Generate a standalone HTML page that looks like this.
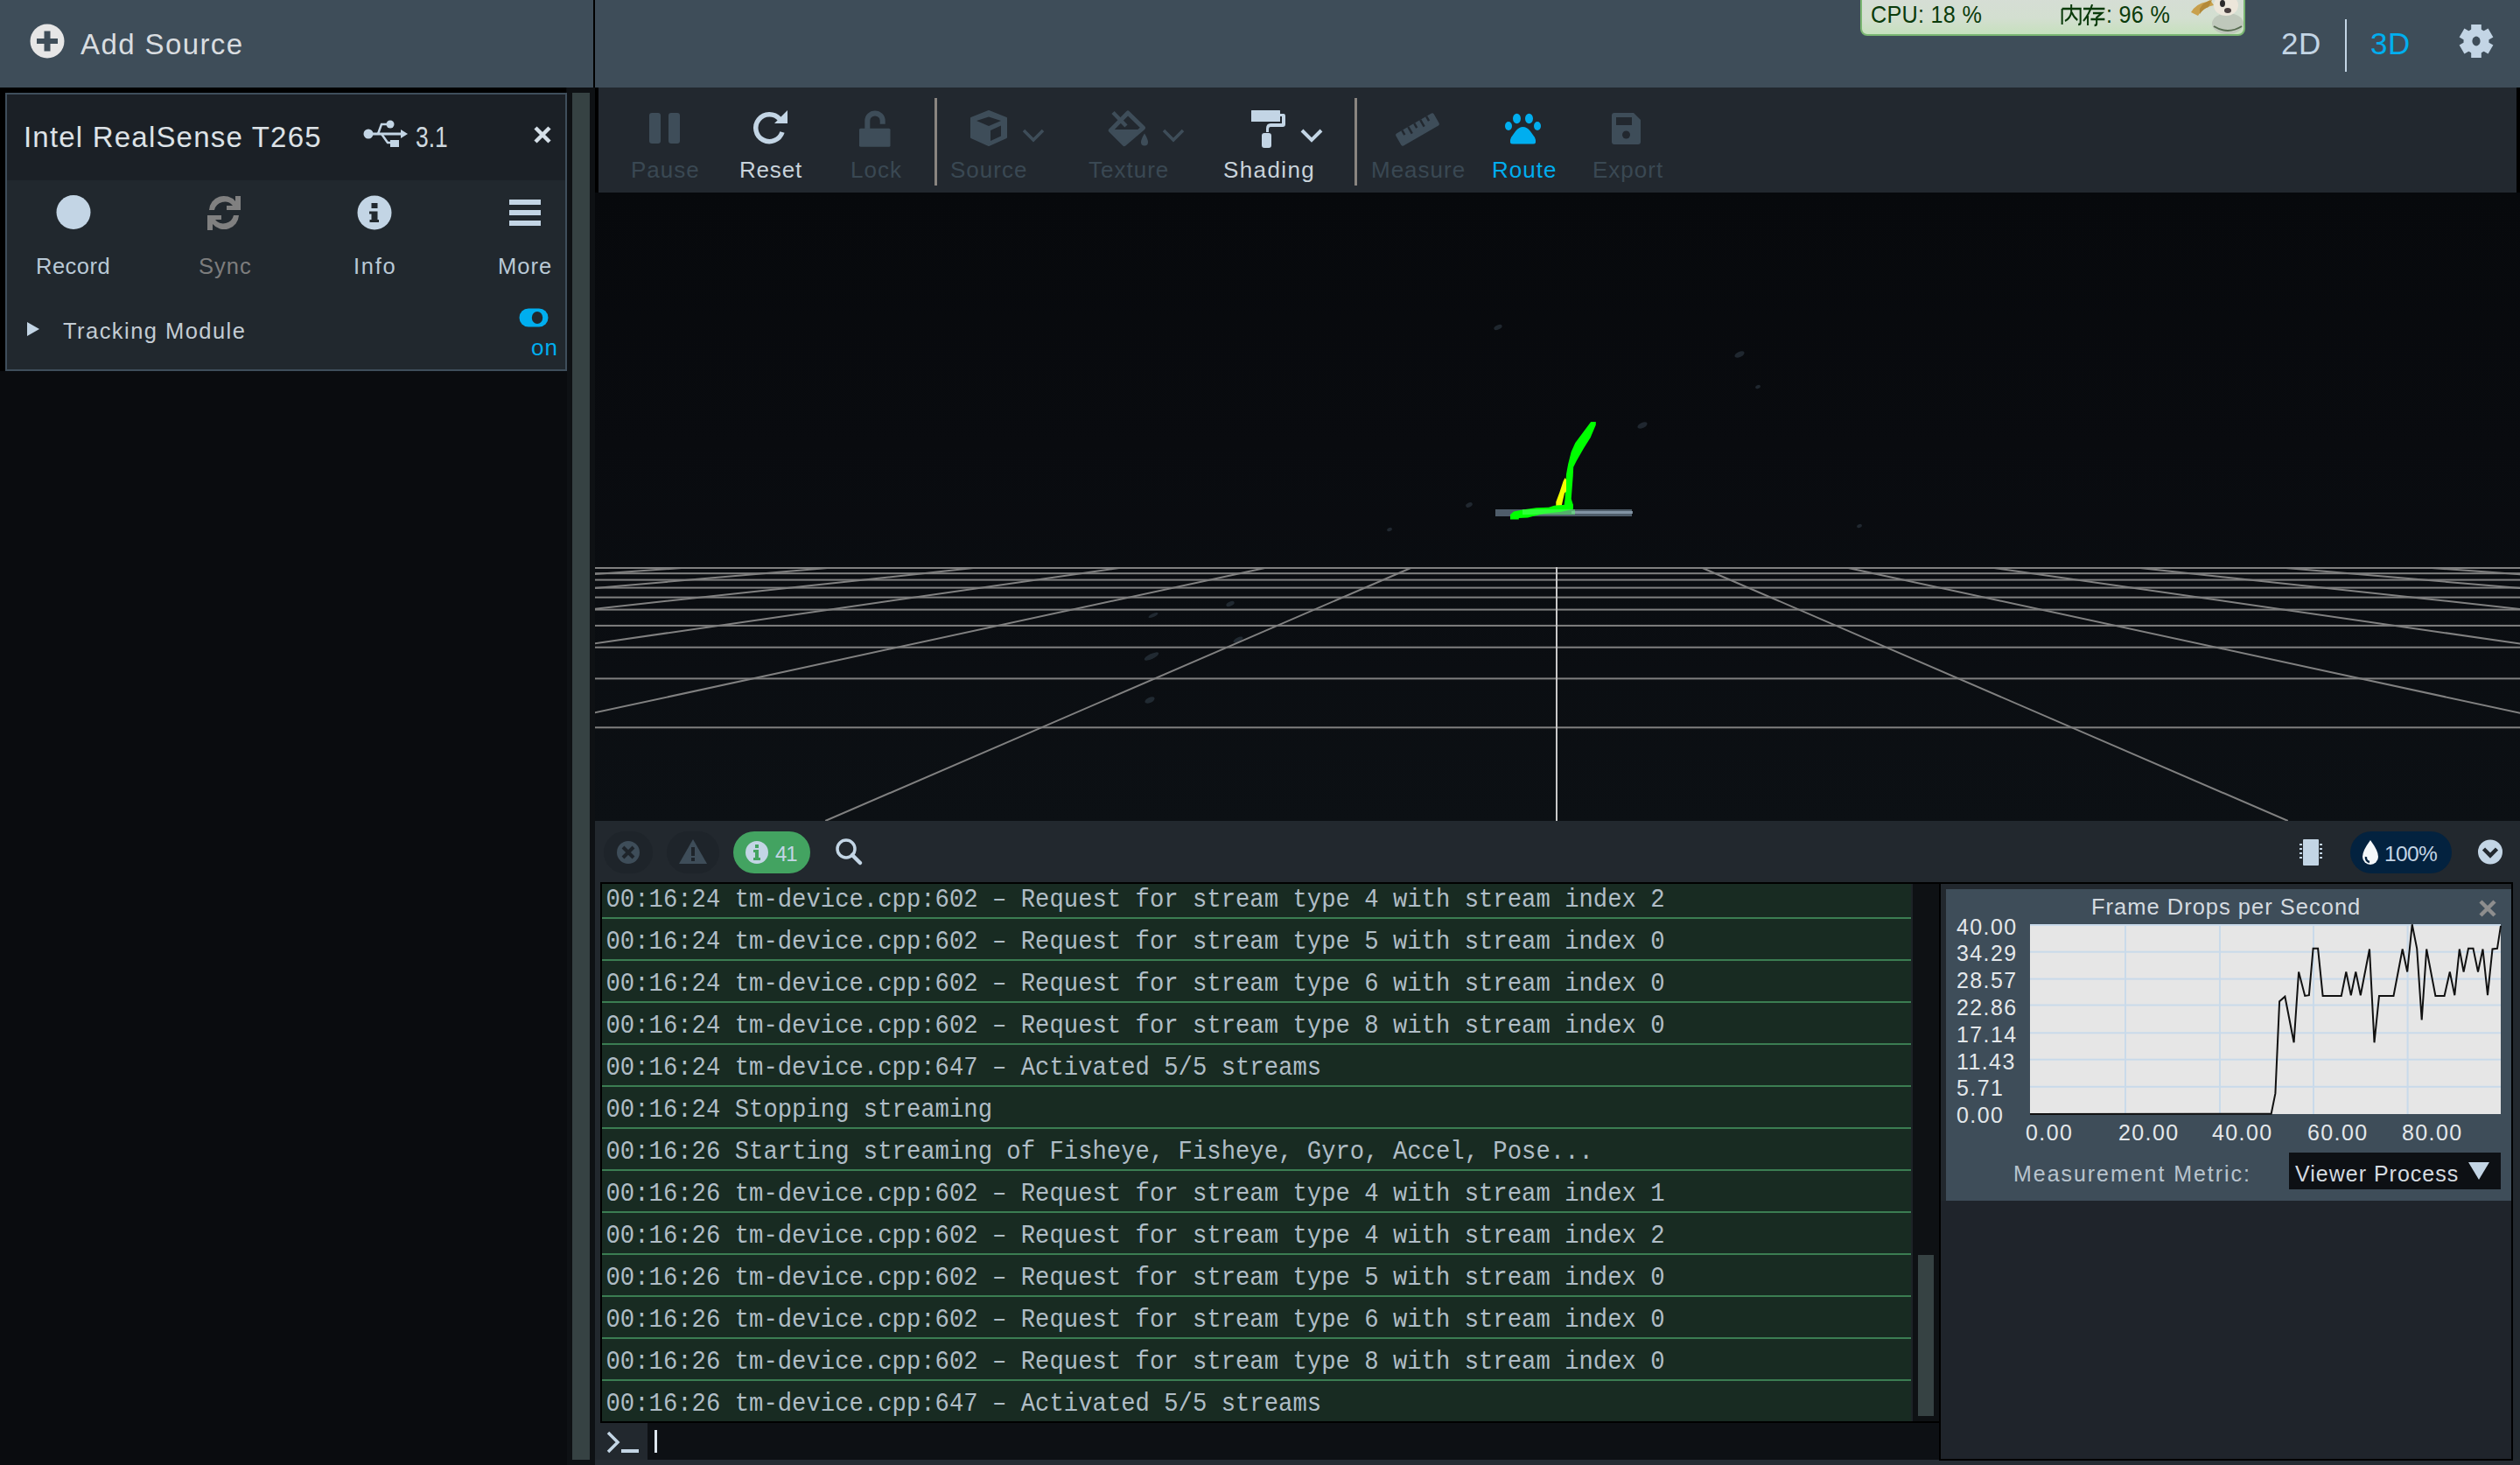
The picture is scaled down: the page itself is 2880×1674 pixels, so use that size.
<!DOCTYPE html><html><head><meta charset="utf-8"><style>
html,body{margin:0;padding:0;background:#090b0d}
body{width:2880px;height:1674px;position:relative;overflow:hidden;background:#090b0d;font-family:'Liberation Sans',sans-serif}
</style></head><body>
<div style="position:absolute;left:0px;top:0px;width:2880px;height:100px;background:#3e4d59;"></div>
<div style="position:absolute;left:678px;top:0px;width:2px;height:100px;background:#000;"></div>
<svg style="position:absolute;left:34px;top:27px;" width="40" height="40" viewBox="0 0 40 40"><circle cx="20" cy="20" r="19.5" fill="#e6e6e6"/><rect x="8" y="17" width="24" height="6" fill="#3e4d59"/><rect x="16.5" y="8.5" width="7" height="23" fill="#3e4d59"/></svg>
<div style="position:absolute;left:92px;top:34.07px;font-family:'Liberation Sans',sans-serif;font-size:33px;line-height:1;letter-spacing:1.4px;color:#d9dde0;white-space:pre;">Add Source</div>
<div style="position:absolute;left:2126px;top:-8px;width:436px;height:45px;border:2px solid #79b571;border-radius:8px;background:linear-gradient(#d6ddd6,#d3dfd0 60%,#c6e0bd);"></div>
<div style="position:absolute;left:2138px;top:3.30px;font-family:'Liberation Sans',sans-serif;font-size:28px;line-height:1;letter-spacing:0.3px;color:#0b3b0b;white-space:pre;transform:scaleX(0.9);transform-origin:0 0;">CPU: 18 %</div>
<svg style="position:absolute;left:2355px;top:5px;" width="54" height="26" viewBox="0 0 54 26"><g fill="none" stroke="#0b3b0b" stroke-width="2.4" transform="scale(0.84 1)"><path d="M2 5 V23 M2 5 H27 V21 Q27 23 24 23 M14.5 0 V9 Q13 16 6 19 M15 9 Q18 15 23 18"/><path d="M31 5 H60 M43 0 Q39 11 31 19 M37 13 V24 M44 10 H56 L49 15 V22 Q49 24 46 24 M41 17 H60"/></g></svg>
<div style="position:absolute;left:2407px;top:3.30px;font-family:'Liberation Sans',sans-serif;font-size:28px;line-height:1;letter-spacing:0.3px;color:#0b3b0b;white-space:pre;transform:scaleX(0.9);transform-origin:0 0;">: 96 %</div>
<svg style="position:absolute;left:2500px;top:0px;" width="66" height="40" viewBox="0 0 66 40"><path d="M4 14 Q10 4 22 2 L26 0 L30 6 Q18 8 12 18Z" fill="#c8a04c"/><path d="M14 10 Q18 2 28 0 L24 8Q18 10 14 16Z" fill="#b38a3a"/><ellipse cx="46" cy="27" rx="18" ry="12" fill="#bfc8bb"/><path d="M30 30 Q46 40 62 30" stroke="#556b4f" stroke-width="2" fill="none"/><ellipse cx="44" cy="6" rx="14" ry="12" fill="#ece6da"/><ellipse cx="40" cy="4" rx="3" ry="4" fill="#2a2a2a"/><ellipse cx="46" cy="12" rx="4" ry="3" fill="#4a4040"/></svg>
<div style="position:absolute;left:2607px;top:32.37px;font-family:'Liberation Sans',sans-serif;font-size:35px;line-height:1;letter-spacing:0.5px;color:#c3d5e5;white-space:pre;">2D</div>
<div style="position:absolute;left:2680px;top:22px;width:2px;height:60px;background:#c3d5e5;"></div>
<div style="position:absolute;left:2709px;top:32.37px;font-family:'Liberation Sans',sans-serif;font-size:35px;line-height:1;letter-spacing:0.5px;color:#00aeef;white-space:pre;">3D</div>
<svg style="position:absolute;left:2810px;top:26px;" width="40" height="42" viewBox="0 0 40 42"><rect x="14.2" y="2" width="11.6" height="10" fill="#c3d5e5" transform="rotate(0 20 21)"/><rect x="14.2" y="2" width="11.6" height="10" fill="#c3d5e5" transform="rotate(60 20 21)"/><rect x="14.2" y="2" width="11.6" height="10" fill="#c3d5e5" transform="rotate(120 20 21)"/><rect x="14.2" y="2" width="11.6" height="10" fill="#c3d5e5" transform="rotate(180 20 21)"/><rect x="14.2" y="2" width="11.6" height="10" fill="#c3d5e5" transform="rotate(240 20 21)"/><rect x="14.2" y="2" width="11.6" height="10" fill="#c3d5e5" transform="rotate(300 20 21)"/><circle cx="20" cy="21" r="14.5" fill="#c3d5e5"/><ellipse cx="20" cy="21" rx="4.6" ry="5.4" fill="#3e4d59"/></svg>
<div style="position:absolute;left:0px;top:100px;width:680px;height:1574px;background:#0a0c0f;"></div>
<div style="position:absolute;left:0px;top:100px;width:647px;height:6px;background:#000;"></div>
<div style="position:absolute;left:0px;top:100px;width:6px;height:324px;background:#000;"></div>
<div style="position:absolute;left:6px;top:106px;width:642px;height:318px;background:#3f4e5b;"></div>
<div style="position:absolute;left:8px;top:108px;width:638px;height:98px;background:#1b2026;"></div>
<div style="position:absolute;left:8px;top:206px;width:638px;height:216px;background:#21282e;"></div>
<div style="position:absolute;left:648px;top:100px;width:32px;height:1574px;background:#0e1114;"></div>
<div style="position:absolute;left:654px;top:106px;width:20px;height:1562px;background:#364243;"></div>
<div style="position:absolute;left:27px;top:140.07px;font-family:'Liberation Sans',sans-serif;font-size:33px;line-height:1;letter-spacing:1.2px;color:#dde2e6;white-space:pre;">Intel RealSense T265</div>
<svg style="position:absolute;left:414px;top:136px;" width="54" height="34" viewBox="0 0 54 34"><g fill="#c3d5e5" stroke="#c3d5e5"><circle cx="7" cy="17" r="5.5" stroke="none"/><path d="M7 17 H46" stroke-width="3" fill="none"/><path d="M44 12 L52 17 L44 22Z" stroke="none"/><path d="M18 17 L22 6 H29" stroke-width="2.5" fill="none"/><circle cx="32" cy="6" r="4.5" stroke="none"/><path d="M22 17 L29 27 H33" stroke-width="2.5" fill="none"/><rect x="32" y="24" width="10" height="8" stroke="none"/></g></svg>
<div style="position:absolute;left:475px;top:140.07px;font-family:'Liberation Sans',sans-serif;font-size:33px;line-height:1;letter-spacing:0px;color:#cfd8df;white-space:pre;transform:scaleX(0.8);transform-origin:0 0;">3.1</div>
<svg style="position:absolute;left:608px;top:142px;" width="24" height="24" viewBox="0 0 24 24"><path d="M4 4 L20 20 M20 4 L4 20" stroke="#d5dfe8" stroke-width="4.5"/></svg>
<svg style="position:absolute;left:64px;top:223px;" width="40" height="40" viewBox="0 0 40 40"><circle cx="20" cy="19.5" r="19.5" fill="#c3d5e5"/></svg>
<svg style="position:absolute;left:235px;top:221px;" width="42" height="44" viewBox="0 0 42 44"><g fill="#808080"><path d="M4 19 A17 17 0 0 1 34 9 L34 3 L40 3 L40 19 L24 19 L24 14 L31 14 A12 12 0 0 0 10 19 Z"/><path d="M38 25 A17 17 0 0 1 8 35 L8 42 L2 42 L2 25 L18 25 L18 30 L11 30 A12 12 0 0 0 32 25 Z"/></g></svg>
<svg style="position:absolute;left:408px;top:223px;" width="40" height="40" viewBox="0 0 40 40"><circle cx="20" cy="20" r="19.5" fill="#c3d5e5"/><g fill="#21282e"><rect x="16.5" y="9" width="7" height="6"/><path d="M14 18.5 H23.5 V28 H25 V31 H14.5 V28 H16.5 V21.5 H14Z"/></g></svg>
<svg style="position:absolute;left:582px;top:227px;" width="36" height="32" viewBox="0 0 36 32"><g fill="#c3d5e5"><rect x="0" y="1" width="36" height="6"/><rect x="0" y="13" width="36" height="6"/><rect x="0" y="25" width="36" height="6"/></g></svg>
<div style="position:absolute;left:41px;top:292.41px;font-family:'Liberation Sans',sans-serif;font-size:25.5px;line-height:1;letter-spacing:0.5px;color:#b9c9d6;white-space:pre;">Record</div>
<div style="position:absolute;left:227px;top:292.41px;font-family:'Liberation Sans',sans-serif;font-size:25.5px;line-height:1;letter-spacing:1.0px;color:#7d7d7d;white-space:pre;">Sync</div>
<div style="position:absolute;left:404px;top:292.41px;font-family:'Liberation Sans',sans-serif;font-size:25.5px;line-height:1;letter-spacing:1.7px;color:#b9c9d6;white-space:pre;">Info</div>
<div style="position:absolute;left:569px;top:292.41px;font-family:'Liberation Sans',sans-serif;font-size:25.5px;line-height:1;letter-spacing:1.0px;color:#b9c9d6;white-space:pre;">More</div>
<svg style="position:absolute;left:30px;top:367px;" width="16" height="18" viewBox="0 0 16 18"><path d="M1 1 L15 9 L1 17Z" fill="#c3d5e5"/></svg>
<div style="position:absolute;left:72px;top:366.41px;font-family:'Liberation Sans',sans-serif;font-size:25.5px;line-height:1;letter-spacing:1.45px;color:#c3ccd4;white-space:pre;">Tracking Module</div>
<svg style="position:absolute;left:593px;top:352px;" width="34" height="23" viewBox="0 0 34 23"><rect x="0.5" y="0.5" width="33" height="21" rx="10.5" fill="#00aeef"/><ellipse cx="21" cy="11" rx="6.2" ry="7" fill="#21282e"/></svg>
<div style="position:absolute;left:607px;top:383.99px;font-family:'Liberation Sans',sans-serif;font-size:26px;line-height:1;letter-spacing:1.0px;color:#00aeef;white-space:pre;">on</div>
<div style="position:absolute;left:680px;top:100px;width:4px;height:120px;background:#000;"></div>
<div style="position:absolute;left:684px;top:100px;width:2192px;height:120px;background:#22282f;"></div>
<div style="position:absolute;left:2876px;top:100px;width:4px;height:120px;background:#000;"></div>
<svg style="position:absolute;left:742px;top:129px;" width="36" height="36" viewBox="0 0 36 36"><g fill="#3e4d59"><rect x="0" y="0" width="13" height="35" rx="3"/><rect x="22" y="0" width="13" height="35" rx="3"/></g></svg>
<div style="position:absolute;left:721px;top:180.99px;font-family:'Liberation Sans',sans-serif;font-size:26px;line-height:1;letter-spacing:1.0px;color:#3a4853;white-space:pre;">Pause</div>
<svg style="position:absolute;left:858px;top:124px;" width="44" height="44" viewBox="0 0 44 44"><path d="M33 12 A15.5 15.5 0 1 0 36 27" fill="none" stroke="#c3d5e5" stroke-width="5.5"/><path d="M42 2 V17 H27 Z" fill="#c3d5e5"/></svg>
<div style="position:absolute;left:845px;top:180.99px;font-family:'Liberation Sans',sans-serif;font-size:26px;line-height:1;letter-spacing:0.8px;color:#c9d3db;white-space:pre;">Reset</div>
<svg style="position:absolute;left:980px;top:124px;" width="40" height="44" viewBox="0 0 40 44"><path d="M11.3 23 V14.1 A8.7 8.7 0 0 1 28.7 14.1 V17.8" fill="none" stroke="#3e4d59" stroke-width="6"/><rect x="2" y="22.7" width="35.5" height="21" rx="1.5" fill="#3e4d59"/></svg>
<div style="position:absolute;left:972px;top:180.99px;font-family:'Liberation Sans',sans-serif;font-size:26px;line-height:1;letter-spacing:1.0px;color:#3a4853;white-space:pre;">Lock</div>
<div style="position:absolute;left:1068px;top:112px;width:3px;height:100px;background:#8a8580;"></div>
<svg style="position:absolute;left:1108px;top:124px;" width="44" height="44" viewBox="0 0 44 44"><path d="M22 3 L42 11 V33 L22 42 L2 33 V11Z" fill="#3e4d59" stroke="#3e4d59" stroke-width="2" stroke-linejoin="round"/><path d="M22 9.5 L36 14 L22 20 L8 14Z" fill="#22282f"/><path d="M24 25 L36 19.5 V31.5 L24 37Z" fill="#22282f"/></svg>
<svg style="position:absolute;left:1168px;top:147px;" width="26" height="16" viewBox="0 0 26 16"><path d="M2 2 L13 13 L24 2" fill="none" stroke="#3e4d59" stroke-width="3.5"/></svg>
<div style="position:absolute;left:1086px;top:180.99px;font-family:'Liberation Sans',sans-serif;font-size:26px;line-height:1;letter-spacing:1.0px;color:#3a4853;white-space:pre;">Source</div>
<svg style="position:absolute;left:1266px;top:126px;" width="48" height="44" viewBox="0 0 48 44"><path d="M23 3 L40.5 20 L18.8 38.6 L3.3 23Z" fill="none" stroke="#3e4d59" stroke-width="5" stroke-linejoin="round"/><path d="M2.3 22 L39 22 L18.8 40 Z" fill="#3e4d59"/><path d="M6 2.5 L21 18" stroke="#3e4d59" stroke-width="4.5"/><path d="M42 26.5 Q46 33 46 36.5 A4 4 0 0 1 38 36.5 Q38 33 42 26.5Z" fill="#3e4d59"/></svg>
<svg style="position:absolute;left:1328px;top:147px;" width="26" height="16" viewBox="0 0 26 16"><path d="M2 2 L13 13 L24 2" fill="none" stroke="#3e4d59" stroke-width="3.5"/></svg>
<div style="position:absolute;left:1244px;top:180.99px;font-family:'Liberation Sans',sans-serif;font-size:26px;line-height:1;letter-spacing:1.0px;color:#3a4853;white-space:pre;">Texture</div>
<svg style="position:absolute;left:1428px;top:124px;" width="46" height="46" viewBox="0 0 46 46"><g fill="#c3d5e5"><rect x="2" y="2" width="33" height="13" rx="0.5"/><path d="M35 6 H39 Q41 6 41 9 V18 Q41 21 38 21 H24 Q22 21 22 24 V27 H19 V23 Q19 17 24 17 H37 V9 H35Z"/><rect x="14" y="28" width="11" height="17" rx="3"/></g></svg>
<svg style="position:absolute;left:1486px;top:146px;" width="28" height="18" viewBox="0 0 28 18"><path d="M2 3 L13 14 L24 3" fill="none" stroke="#c3d5e5" stroke-width="4"/></svg>
<div style="position:absolute;left:1398px;top:180.99px;font-family:'Liberation Sans',sans-serif;font-size:26px;line-height:1;letter-spacing:1.4px;color:#c9d3db;white-space:pre;">Shading</div>
<div style="position:absolute;left:1548px;top:112px;width:3px;height:100px;background:#8a8580;"></div>
<svg style="position:absolute;left:1593px;top:126px;" width="54" height="44" viewBox="0 0 54 44"><g transform="rotate(-30 27 22)"><rect x="2" y="14" width="50" height="16" rx="2" fill="#3e4d59"/><g fill="#22282f"><rect x="10" y="14" width="2.5" height="6"/><rect x="18" y="14" width="2.5" height="9"/><rect x="26" y="14" width="2.5" height="6"/><rect x="34" y="14" width="2.5" height="9"/><rect x="42" y="14" width="2.5" height="6"/></g></g></svg>
<div style="position:absolute;left:1567px;top:180.99px;font-family:'Liberation Sans',sans-serif;font-size:26px;line-height:1;letter-spacing:1.0px;color:#3a4853;white-space:pre;">Measure</div>
<svg style="position:absolute;left:1718px;top:127px;" width="44" height="42" viewBox="0 0 44 42"><g fill="#00aeef"><ellipse cx="15.5" cy="8.5" rx="4.5" ry="5.8"/><ellipse cx="29.5" cy="8.5" rx="4.5" ry="5.8"/><ellipse cx="6" cy="17" rx="4" ry="5"/><ellipse cx="39" cy="17" rx="4" ry="5"/><path d="M22.5 18 Q27 18 31 23 L36 30 Q37.5 33 37 36 Q36.5 37.5 34 37.5 H11 Q8.5 37.5 8 36 Q7.5 33 9 30 L14 23 Q18 18 22.5 18Z"/></g></svg>
<div style="position:absolute;left:1705px;top:180.99px;font-family:'Liberation Sans',sans-serif;font-size:26px;line-height:1;letter-spacing:1.0px;color:#00aeef;white-space:pre;">Route</div>
<svg style="position:absolute;left:1840px;top:128px;" width="36" height="38" viewBox="0 0 36 38"><path d="M2 4 Q2 1 5 1 H27 L35 9 V34 Q35 37 32 37 H5 Q2 37 2 34Z" fill="#3e4d59"/><rect x="7" y="6" width="18" height="9" fill="#22282f"/><circle cx="18.5" cy="26" r="4.5" fill="#22282f"/></svg>
<div style="position:absolute;left:1820px;top:180.99px;font-family:'Liberation Sans',sans-serif;font-size:26px;line-height:1;letter-spacing:1.0px;color:#3a4853;white-space:pre;">Export</div>
<div style="position:absolute;left:680px;top:220px;width:2200px;height:718px;background:linear-gradient(#07090c 0%,#090b0f 40%,#0c1014 100%);"></div>
<svg style="position:absolute;left:680px;top:220px;" width="2200" height="718" viewBox="0 0 2200 718"><rect x="0" y="428.0" width="2200" height="2" fill="#808080"/><rect x="0" y="434.2" width="2200" height="2" fill="#808080"/><rect x="0" y="441.6" width="2200" height="2" fill="#808080"/><rect x="0" y="450.6" width="2200" height="2" fill="#808080"/><rect x="0" y="461.6" width="2200" height="2" fill="#808080"/><rect x="0" y="475.6" width="2200" height="2" fill="#808080"/><rect x="0" y="493.9" width="2200" height="2" fill="#808080"/><rect x="0" y="518.7" width="2200" height="2" fill="#808080"/><rect x="0" y="554.4" width="2200" height="2" fill="#808080"/><rect x="0" y="610.3" width="2200" height="2" fill="#808080"/><path d="M98.8 429.0 L-3915.9 718.0 M265.5 429.0 L-3080.1 718.0 M432.2 429.0 L-2244.3 718.0 M598.9 429.0 L-1408.4 718.0 M765.6 429.0 L-572.6 718.0 M932.3 429.0 L263.2 718.0 M1265.7 429.0 L1934.8 718.0 M1432.4 429.0 L2770.6 718.0 M1599.1 429.0 L3606.4 718.0 M1765.8 429.0 L4442.3 718.0 M1932.5 429.0 L5278.1 718.0 M2099.2 429.0 L6113.9 718.0" stroke="#808080" stroke-width="2" fill="none"/><rect x="1098.0" y="428" width="2" height="290" fill="#c8c8c8"/></svg>
<svg style="position:absolute;left:680px;top:220px;" width="2200" height="718" viewBox="0 0 2200 718"><ellipse cx="1032" cy="154" rx="5" ry="2.5" fill="#7f99b3" opacity="0.2" transform="rotate(-25 1032 154)"/><ellipse cx="1308" cy="185" rx="6" ry="3" fill="#7f99b3" opacity="0.2" transform="rotate(-25 1308 185)"/><ellipse cx="1197" cy="266" rx="6" ry="3" fill="#7f99b3" opacity="0.2" transform="rotate(-25 1197 266)"/><ellipse cx="999" cy="357" rx="4" ry="2.5" fill="#7f99b3" opacity="0.2" transform="rotate(-25 999 357)"/><ellipse cx="1445" cy="381" rx="3" ry="2" fill="#7f99b3" opacity="0.2" transform="rotate(-25 1445 381)"/><ellipse cx="908" cy="385" rx="3" ry="2" fill="#7f99b3" opacity="0.2" transform="rotate(-25 908 385)"/><ellipse cx="636" cy="530" rx="9" ry="3" fill="#7f99b3" opacity="0.2" transform="rotate(-25 636 530)"/><ellipse cx="634" cy="580" rx="6" ry="3" fill="#7f99b3" opacity="0.2" transform="rotate(-25 634 580)"/><ellipse cx="638" cy="483" rx="6" ry="2" fill="#7f99b3" opacity="0.2" transform="rotate(-25 638 483)"/><ellipse cx="726" cy="470" rx="5" ry="2.5" fill="#7f99b3" opacity="0.2" transform="rotate(-25 726 470)"/><ellipse cx="735" cy="511" rx="6" ry="2.5" fill="#7f99b3" opacity="0.2" transform="rotate(-25 735 511)"/><ellipse cx="1329" cy="222" rx="3" ry="2" fill="#7f99b3" opacity="0.2" transform="rotate(-25 1329 222)"/></svg>
<svg style="position:absolute;left:1700px;top:470px;" width="180" height="130" viewBox="0 0 180 130"><rect x="9" y="112" width="156" height="8" fill="#4f5d6a"/><rect x="96" y="114" width="70" height="3" fill="#8fa3b3" opacity="0.8"/><polygon points="118.2,12.0 100.3,36.0 95.7,46.3 92.1,60.6 90.0,71.9 88.5,100.6 87.0,111.8 97.7,111.8 97.7,106.2 95.7,100.0 97.7,74.0 98.2,63.7 101.8,56.5 110.0,42.2 117.7,29.9 123.8,15.6 123.8,12.0" fill="#00ff00"/><polygon points="88.5,76.0 90.0,78.0 90.0,91.4 88.0,93.4 85.4,104.7 83.9,111.8 78.3,111.8 78.3,103.6 82.4,92.4 86.5,80.0" fill="#f2ff00"/><polygon points="26.0,118.0 26.0,123.6 35.8,123.6 35.8,122.0 46.0,121.5 53.7,119.5 64.0,117.0 83.4,114.9 97.7,111.8 97.7,106.2 76.2,107.7 70.0,109.8 55.8,110.3 41.4,112.3 30.0,114.4" fill="#00ff00"/><rect x="40" y="112" width="60" height="6" fill="#5cff70" opacity="0.5"/></svg>
<div style="position:absolute;left:680px;top:938px;width:2200px;height:736px;background:#22282e;"></div>
<svg style="position:absolute;left:690px;top:950px;" width="56" height="48" viewBox="0 0 56 48"><rect x="0" y="0" width="56" height="48" rx="24" fill="#1e242a"/><circle cx="28" cy="24" r="13" fill="#3e4d59"/><path d="M22 18 L34 30 M34 18 L22 30" stroke="#1e242a" stroke-width="4"/></svg>
<svg style="position:absolute;left:762px;top:950px;" width="60" height="48" viewBox="0 0 60 48"><rect x="0" y="0" width="60" height="48" rx="24" fill="#1e242a"/><path d="M30 9 L46 37 H14Z" fill="#3e4d59"/><rect x="28" y="18" width="4" height="10" fill="#1e242a"/><rect x="28" y="30" width="4" height="4" fill="#1e242a"/></svg>
<svg style="position:absolute;left:838px;top:950px;" width="88" height="48" viewBox="0 0 88 48"><rect x="0" y="0" width="88" height="48" rx="24" fill="#43a361"/><circle cx="27" cy="24" r="13" fill="#c3d5e5"/><g fill="#43a361"><rect x="25" y="15" width="4" height="4"/><path d="M23 21 H29 V30 H31 V33 H23 V30 H25 V24 H23Z"/></g></svg>
<div style="position:absolute;left:886px;top:963.68px;font-family:'Liberation Sans',sans-serif;font-size:24px;line-height:1;letter-spacing:-1.2px;color:#c3d5e5;white-space:pre;">41</div>
<svg style="position:absolute;left:954px;top:957px;" width="34" height="34" viewBox="0 0 34 34"><circle cx="13" cy="13" r="10" fill="none" stroke="#c3d5e5" stroke-width="3.5"/><path d="M20 20 L29 29" stroke="#c3d5e5" stroke-width="4.5" stroke-linecap="round"/></svg>
<svg style="position:absolute;left:2626px;top:957px;" width="32" height="34" viewBox="0 0 32 34"><rect x="6" y="2" width="18" height="30" rx="1" fill="#c3d5e5"/><g fill="#c3d5e5"><rect x="2" y="7" width="3" height="2"/><rect x="2" y="12" width="3" height="2"/><rect x="2" y="17" width="3" height="2"/><rect x="2" y="22" width="3" height="2"/><rect x="25" y="7" width="3" height="2"/><rect x="25" y="12" width="3" height="2"/><rect x="25" y="17" width="3" height="2"/><rect x="25" y="22" width="3" height="2"/></g></svg>
<svg style="position:absolute;left:2686px;top:950px;" width="116" height="48" viewBox="0 0 116 48"><rect x="0" y="0" width="116" height="48" rx="24" fill="#03223f"/><path d="M23 10 Q32 22 32 29 A9 9 0 0 1 14 29 Q14 22 23 10Z" fill="#f4f7fa"/><path d="M18 29 A5 5 0 0 0 22 35" stroke="#03223f" stroke-width="2.5" fill="none"/></svg>
<div style="position:absolute;left:2725px;top:963.76px;font-family:'Liberation Sans',sans-serif;font-size:24.5px;line-height:1;letter-spacing:-0.6px;color:#c3d5e5;white-space:pre;">100%</div>
<svg style="position:absolute;left:2831px;top:959px;" width="30" height="30" viewBox="0 0 30 30"><circle cx="15" cy="14.5" r="14" fill="#c3d5e5"/><path d="M7.5 11 L15 18.5 L22.5 11" fill="none" stroke="#22282e" stroke-width="4.5"/></svg>
<div style="position:absolute;left:686px;top:1008px;width:1532px;height:618px;background:#000;"></div>
<div style="position:absolute;left:688px;top:1010px;width:1498px;height:614px;background:#182b22;"></div>
<div style="position:absolute;left:2186px;top:1010px;width:30px;height:614px;background:#0e1114;"></div>
<div style="position:absolute;left:2184px;top:1010px;width:2px;height:614px;background:#1d2327;"></div>
<div style="position:absolute;left:2192px;top:1434px;width:18px;height:184px;background:#364243;"></div>
<div style="position:absolute;left:688px;top:1048px;width:1496px;height:2px;background:#3b7d52;"></div>
<div style="position:absolute;left:688px;top:1096px;width:1496px;height:2px;background:#3b7d52;"></div>
<div style="position:absolute;left:688px;top:1144px;width:1496px;height:2px;background:#3b7d52;"></div>
<div style="position:absolute;left:688px;top:1192px;width:1496px;height:2px;background:#3b7d52;"></div>
<div style="position:absolute;left:688px;top:1240px;width:1496px;height:2px;background:#3b7d52;"></div>
<div style="position:absolute;left:688px;top:1288px;width:1496px;height:2px;background:#3b7d52;"></div>
<div style="position:absolute;left:688px;top:1336px;width:1496px;height:2px;background:#3b7d52;"></div>
<div style="position:absolute;left:688px;top:1384px;width:1496px;height:2px;background:#3b7d52;"></div>
<div style="position:absolute;left:688px;top:1432px;width:1496px;height:2px;background:#3b7d52;"></div>
<div style="position:absolute;left:688px;top:1480px;width:1496px;height:2px;background:#3b7d52;"></div>
<div style="position:absolute;left:688px;top:1528px;width:1496px;height:2px;background:#3b7d52;"></div>
<div style="position:absolute;left:688px;top:1576px;width:1496px;height:2px;background:#3b7d52;"></div>
<div style="position:absolute;left:692.5px;top:1014.93px;font-family:'Liberation Mono',monospace;font-size:27.25px;line-height:1;letter-spacing:0px;color:#b0bdc6;white-space:pre;transform:scaleY(1.05);transform-origin:0 20.9px;">00:16:24 tm-device.cpp:602 – Request for stream type 4 with stream index 2</div>
<div style="position:absolute;left:692.5px;top:1062.93px;font-family:'Liberation Mono',monospace;font-size:27.25px;line-height:1;letter-spacing:0px;color:#b0bdc6;white-space:pre;transform:scaleY(1.05);transform-origin:0 20.9px;">00:16:24 tm-device.cpp:602 – Request for stream type 5 with stream index 0</div>
<div style="position:absolute;left:692.5px;top:1110.93px;font-family:'Liberation Mono',monospace;font-size:27.25px;line-height:1;letter-spacing:0px;color:#b0bdc6;white-space:pre;transform:scaleY(1.05);transform-origin:0 20.9px;">00:16:24 tm-device.cpp:602 – Request for stream type 6 with stream index 0</div>
<div style="position:absolute;left:692.5px;top:1158.93px;font-family:'Liberation Mono',monospace;font-size:27.25px;line-height:1;letter-spacing:0px;color:#b0bdc6;white-space:pre;transform:scaleY(1.05);transform-origin:0 20.9px;">00:16:24 tm-device.cpp:602 – Request for stream type 8 with stream index 0</div>
<div style="position:absolute;left:692.5px;top:1206.93px;font-family:'Liberation Mono',monospace;font-size:27.25px;line-height:1;letter-spacing:0px;color:#b0bdc6;white-space:pre;transform:scaleY(1.05);transform-origin:0 20.9px;">00:16:24 tm-device.cpp:647 – Activated 5/5 streams</div>
<div style="position:absolute;left:692.5px;top:1254.93px;font-family:'Liberation Mono',monospace;font-size:27.25px;line-height:1;letter-spacing:0px;color:#b0bdc6;white-space:pre;transform:scaleY(1.05);transform-origin:0 20.9px;">00:16:24 Stopping streaming</div>
<div style="position:absolute;left:692.5px;top:1302.93px;font-family:'Liberation Mono',monospace;font-size:27.25px;line-height:1;letter-spacing:0px;color:#b0bdc6;white-space:pre;transform:scaleY(1.05);transform-origin:0 20.9px;">00:16:26 Starting streaming of Fisheye, Fisheye, Gyro, Accel, Pose...</div>
<div style="position:absolute;left:692.5px;top:1350.93px;font-family:'Liberation Mono',monospace;font-size:27.25px;line-height:1;letter-spacing:0px;color:#b0bdc6;white-space:pre;transform:scaleY(1.05);transform-origin:0 20.9px;">00:16:26 tm-device.cpp:602 – Request for stream type 4 with stream index 1</div>
<div style="position:absolute;left:692.5px;top:1398.93px;font-family:'Liberation Mono',monospace;font-size:27.25px;line-height:1;letter-spacing:0px;color:#b0bdc6;white-space:pre;transform:scaleY(1.05);transform-origin:0 20.9px;">00:16:26 tm-device.cpp:602 – Request for stream type 4 with stream index 2</div>
<div style="position:absolute;left:692.5px;top:1446.93px;font-family:'Liberation Mono',monospace;font-size:27.25px;line-height:1;letter-spacing:0px;color:#b0bdc6;white-space:pre;transform:scaleY(1.05);transform-origin:0 20.9px;">00:16:26 tm-device.cpp:602 – Request for stream type 5 with stream index 0</div>
<div style="position:absolute;left:692.5px;top:1494.93px;font-family:'Liberation Mono',monospace;font-size:27.25px;line-height:1;letter-spacing:0px;color:#b0bdc6;white-space:pre;transform:scaleY(1.05);transform-origin:0 20.9px;">00:16:26 tm-device.cpp:602 – Request for stream type 6 with stream index 0</div>
<div style="position:absolute;left:692.5px;top:1542.93px;font-family:'Liberation Mono',monospace;font-size:27.25px;line-height:1;letter-spacing:0px;color:#b0bdc6;white-space:pre;transform:scaleY(1.05);transform-origin:0 20.9px;">00:16:26 tm-device.cpp:602 – Request for stream type 8 with stream index 0</div>
<div style="position:absolute;left:692.5px;top:1590.93px;font-family:'Liberation Mono',monospace;font-size:27.25px;line-height:1;letter-spacing:0px;color:#b0bdc6;white-space:pre;transform:scaleY(1.05);transform-origin:0 20.9px;">00:16:26 tm-device.cpp:647 – Activated 5/5 streams</div>
<div style="position:absolute;left:680px;top:1626px;width:60px;height:42px;background:#22282e;"></div>
<div style="position:absolute;left:740px;top:1626px;width:1476px;height:42px;background:#0d1014;"></div>
<svg style="position:absolute;left:692px;top:1634px;" width="42" height="30" viewBox="0 0 42 30"><path d="M3 3 L14 14 L3 25" fill="none" stroke="#c3d5e5" stroke-width="3.5"/><rect x="18" y="22" width="20" height="4" fill="#c3d5e5"/></svg>
<div style="position:absolute;left:748px;top:1634px;width:2.5px;height:26px;background:#dde6ee;"></div>
<div style="position:absolute;left:680px;top:1668px;width:2200px;height:6px;background:#262c33;"></div>
<div style="position:absolute;left:2216px;top:1008px;width:656px;height:661px;background:#000;"></div>
<div style="position:absolute;left:2218px;top:1010px;width:652px;height:657px;background:#1f242b;"></div>
<div style="position:absolute;left:2218px;top:1010px;width:652px;height:6px;background:#22282e;"></div>
<div style="position:absolute;left:2218px;top:1010px;width:6px;height:362px;background:#22282e;"></div>
<div style="position:absolute;left:2224px;top:1016px;width:646px;height:356px;background:#3e4d59;"></div>
<div style="position:absolute;left:2390px;top:1024.41px;font-family:'Liberation Sans',sans-serif;font-size:25.5px;line-height:1;letter-spacing:1.0px;color:#d5dbe0;white-space:pre;">Frame Drops per Second</div>
<svg style="position:absolute;left:2832px;top:1027px;" width="24" height="22" viewBox="0 0 24 22"><path d="M3 3 L19 19 M19 3 L3 19" stroke="#8e8e8e" stroke-width="4.5"/></svg>
<svg style="position:absolute;left:2320px;top:1056px;" width="538" height="217" viewBox="0 0 538 217"><rect x="0" y="0" width="538" height="217" fill="#e6e6e6"/><rect x="108" y="0" width="2" height="217" fill="#c9daea"/><rect x="216" y="0" width="2" height="217" fill="#c9daea"/><rect x="323" y="0" width="2" height="217" fill="#c9daea"/><rect x="430.6" y="0" width="2" height="217" fill="#c9daea"/><rect x="0" y="30.7" width="538" height="2" fill="#c9daea"/><rect x="0" y="61.6" width="538" height="2" fill="#c9daea"/><rect x="0" y="91.5" width="538" height="2" fill="#c9daea"/><rect x="0" y="123.3" width="538" height="2" fill="#c9daea"/><rect x="0" y="153.7" width="538" height="2" fill="#c9daea"/><rect x="0" y="184.8" width="538" height="2" fill="#c9daea"/><rect x="0" y="0" width="538" height="2" fill="#c9daea"/></svg>
<svg style="position:absolute;left:2300px;top:1040px;" width="580" height="250" viewBox="0 0 580 250"><polyline points="20.0,233.0 295.7,232.7 300.4,209.4 305.1,104.2 311.4,98.7 321.6,151.3 327.1,70.5 334.2,97.9 338.9,97.2 343.6,43.8 349.1,43.8 354.6,97.9 375.8,97.9 381.3,70.5 386.8,97.2 392.3,70.5 397.8,97.2 408.0,44.5 413.5,151.3 419.0,97.9 435.5,97.9 445.7,44.5 451.2,70.5 456.7,16.3 462.2,43.8 467.7,125.4 473.2,44.5 483.4,97.9 493.6,97.9 499.8,70.5 505.3,97.2 510.8,44.5 515.6,70.5 521.0,43.8 526.5,43.8 532.0,70.5 537.5,44.5 543.0,97.2 548.5,44.5 554.0,43.8 558.0,17.9" fill="none" stroke="#111" stroke-width="2" stroke-linejoin="miter"/></svg>
<div style="position:absolute;left:2236px;top:1046.64px;font-family:'Liberation Sans',sans-serif;font-size:25px;line-height:1;letter-spacing:1.4px;color:#e3e7ea;white-space:pre;">40.00</div>
<div style="position:absolute;left:2236px;top:1077.44px;font-family:'Liberation Sans',sans-serif;font-size:25px;line-height:1;letter-spacing:1.4px;color:#e3e7ea;white-space:pre;">34.29</div>
<div style="position:absolute;left:2236px;top:1108.24px;font-family:'Liberation Sans',sans-serif;font-size:25px;line-height:1;letter-spacing:1.4px;color:#e3e7ea;white-space:pre;">28.57</div>
<div style="position:absolute;left:2236px;top:1139.04px;font-family:'Liberation Sans',sans-serif;font-size:25px;line-height:1;letter-spacing:1.4px;color:#e3e7ea;white-space:pre;">22.86</div>
<div style="position:absolute;left:2236px;top:1169.84px;font-family:'Liberation Sans',sans-serif;font-size:25px;line-height:1;letter-spacing:1.4px;color:#e3e7ea;white-space:pre;">17.14</div>
<div style="position:absolute;left:2236px;top:1200.64px;font-family:'Liberation Sans',sans-serif;font-size:25px;line-height:1;letter-spacing:1.4px;color:#e3e7ea;white-space:pre;">11.43</div>
<div style="position:absolute;left:2236px;top:1231.44px;font-family:'Liberation Sans',sans-serif;font-size:25px;line-height:1;letter-spacing:1.4px;color:#e3e7ea;white-space:pre;">5.71</div>
<div style="position:absolute;left:2236px;top:1262.24px;font-family:'Liberation Sans',sans-serif;font-size:25px;line-height:1;letter-spacing:1.4px;color:#e3e7ea;white-space:pre;">0.00</div>
<div style="position:absolute;left:2315px;top:1282.24px;font-family:'Liberation Sans',sans-serif;font-size:25px;line-height:1;letter-spacing:1.4px;color:#e3e7ea;white-space:pre;">0.00</div>
<div style="position:absolute;left:2421px;top:1282.24px;font-family:'Liberation Sans',sans-serif;font-size:25px;line-height:1;letter-spacing:1.4px;color:#e3e7ea;white-space:pre;">20.00</div>
<div style="position:absolute;left:2528px;top:1282.24px;font-family:'Liberation Sans',sans-serif;font-size:25px;line-height:1;letter-spacing:1.4px;color:#e3e7ea;white-space:pre;">40.00</div>
<div style="position:absolute;left:2637px;top:1282.24px;font-family:'Liberation Sans',sans-serif;font-size:25px;line-height:1;letter-spacing:1.4px;color:#e3e7ea;white-space:pre;">60.00</div>
<div style="position:absolute;left:2745px;top:1282.24px;font-family:'Liberation Sans',sans-serif;font-size:25px;line-height:1;letter-spacing:1.4px;color:#e3e7ea;white-space:pre;">80.00</div>
<div style="position:absolute;left:2301px;top:1328.84px;font-family:'Liberation Sans',sans-serif;font-size:25px;line-height:1;letter-spacing:1.95px;color:#b8c4ce;white-space:pre;">Measurement Metric:</div>
<div style="position:absolute;left:2616px;top:1317px;width:242px;height:42px;background:#0d1014;"></div>
<div style="position:absolute;left:2623px;top:1328.84px;font-family:'Liberation Sans',sans-serif;font-size:25px;line-height:1;letter-spacing:1.0px;color:#d5dbe0;white-space:pre;">Viewer Process</div>
<svg style="position:absolute;left:2820px;top:1327px;" width="26" height="22" viewBox="0 0 26 22"><path d="M1 1 H25 L13 21Z" fill="#c3d5e5"/></svg>
</body></html>
